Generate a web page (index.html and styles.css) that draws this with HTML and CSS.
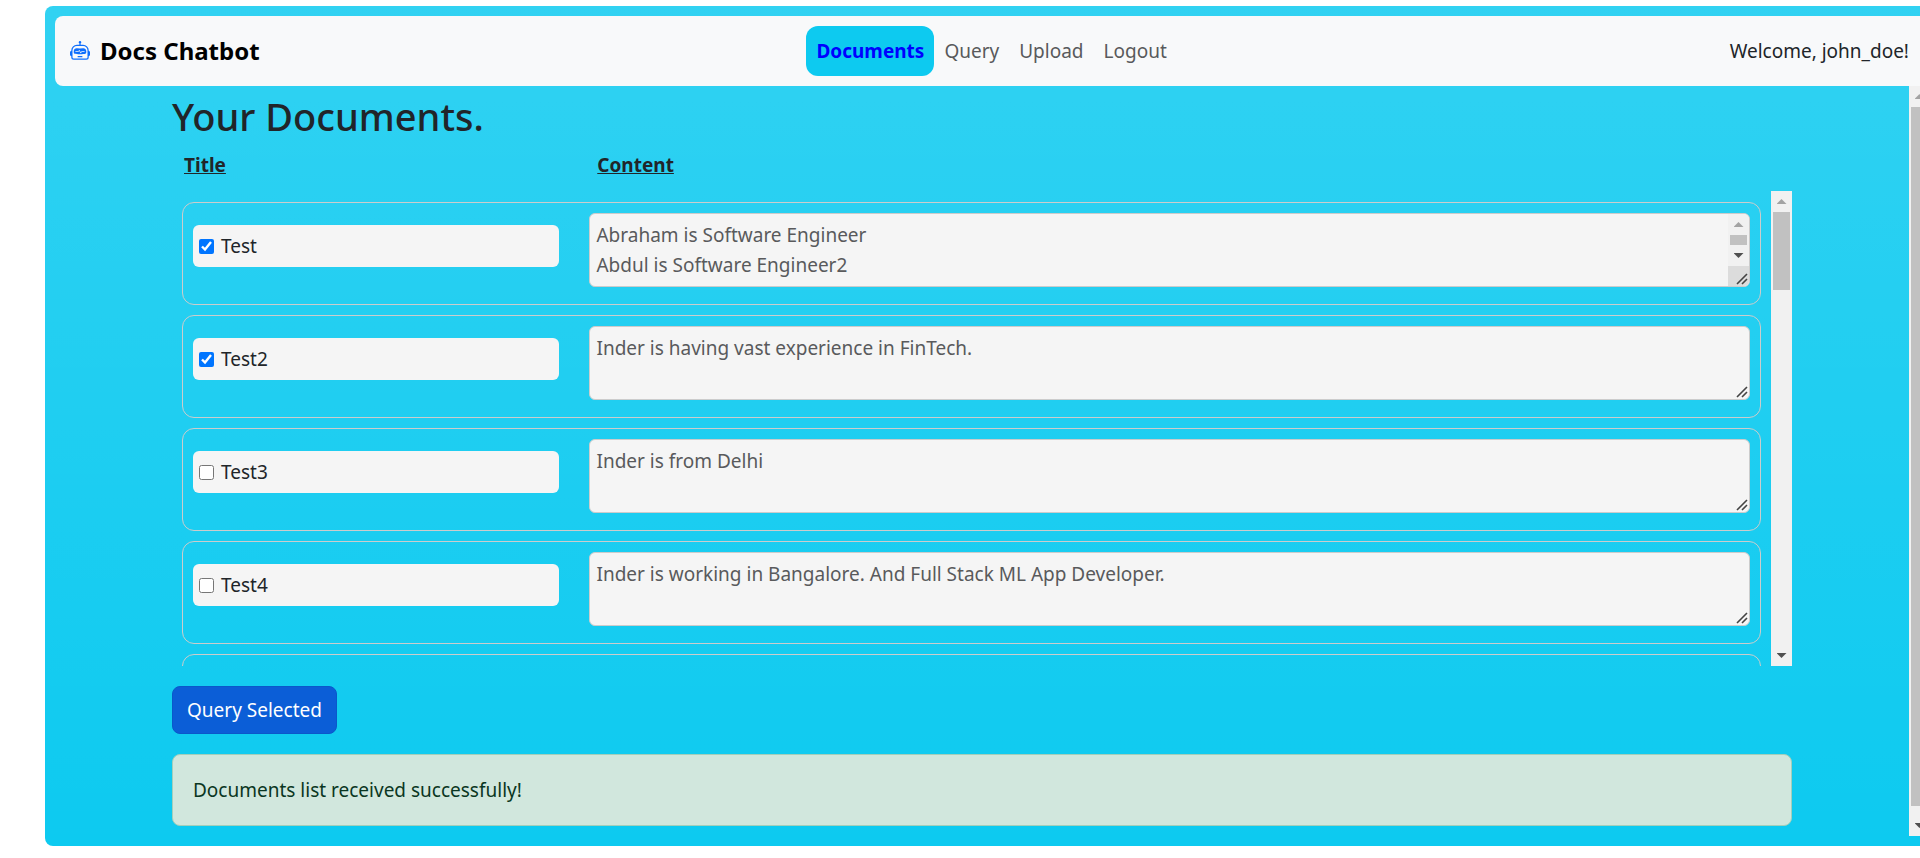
FILE: index.html
```html
<!DOCTYPE html>
<html lang="en">
<head>
<meta charset="utf-8">
<title>Docs Chatbot</title>
<link rel="stylesheet" href="styles.css">
</head>
<body>
<div class="app">
  <nav class="navbar">
    <a class="brand" href="#">
      <svg class="brand-icon" viewBox="0 0 16 16" fill="currentColor" aria-hidden="true">
        <path d="M6 12.5a.5.5 0 0 1 .5-.5h3a.5.5 0 0 1 0 1h-3a.5.5 0 0 1-.5-.5M3 8.062C3 6.76 4.235 5.765 5.53 5.886a26.6 26.6 0 0 0 4.94 0C11.765 5.765 13 6.76 13 8.062v1.157a.93.93 0 0 1-.765.935c-.845.147-2.34.346-4.235.346s-3.39-.2-4.235-.346A.93.93 0 0 1 3 9.219zm4.542-.827a.25.25 0 0 0-.217.068l-.92.9a25 25 0 0 1-1.871-.183.25.25 0 0 0-.068.495c.55.076 1.232.149 2.02.193a.25.25 0 0 0 .189-.071l.754-.736.847 1.71a.25.25 0 0 0 .404.062l.932-.97a25 25 0 0 0 1.922-.188.25.25 0 0 0-.068-.495c-.538.074-1.207.145-1.98.189a.25.25 0 0 0-.166.076l-.754.785-.842-1.7a.25.25 0 0 0-.182-.135"/>
        <path d="M8.500 1.866a1 1 0 1 0-1 0V3h-2A4.500 4.500 0 0 0 1 7.500V8a1 1 0 0 0-1 1v2a1 1 0 0 0 1 1v1a2 2 0 0 0 2 2h10a2 2 0 0 0 2-2v-1a1 1 0 0 0 1-1V9a1 1 0 0 0-1-1v-.5A4.500 4.500 0 0 0 10.500 3h-2zM14 7.500V13a1 1 0 0 1-1 1H3a1 1 0 0 1-1-1V7.500A3.500 3.500 0 0 1 5.500 4h5A3.500 3.500 0 0 1 14 7.500"/>
      </svg>
      Docs Chatbot
    </a>
    <div class="nav-links">
      <a class="nav-link active" href="#">Documents</a>
      <a class="nav-link" href="#">Query</a>
      <a class="nav-link" href="#">Upload</a>
      <a class="nav-link" href="#">Logout</a>
    </div>
    <span class="welcome">Welcome, john_doe!</span>
  </nav>
  <main class="page">
    <div class="page-body">
      <div class="container">
        <h1 class="heading">Your Documents.</h1>
        <div class="columns">
          <span>Title</span>
          <span>Content</span>
        </div>
        <div class="list">
          <div class="list-body">
            <div class="card">
              <label class="doc-title"><input type="checkbox" checked>Test</label>
              <div class="doc-content">
                <textarea aria-label="Content of Test" readonly>Abraham is Software Engineer
Abdul is Software Engineer2</textarea>
                <div class="scrollbar with-corner" aria-hidden="true">
                  <span class="arrow up"></span>
                  <span class="track"><span class="thumb"></span></span>
                  <span class="arrow down"></span>
                </div>
                <svg class="grip" viewBox="0 0 10 10" aria-hidden="true"><path d="M0 10L10 0M5 10L10 5"/></svg>
              </div>
            </div>
            <div class="card">
              <label class="doc-title"><input type="checkbox" checked>Test2</label>
              <div class="doc-content">
                <textarea aria-label="Content of Test2" readonly>Inder is having vast experience in FinTech.</textarea>
                <svg class="grip" viewBox="0 0 10 10" aria-hidden="true"><path d="M0 10L10 0M5 10L10 5"/></svg>
              </div>
            </div>
            <div class="card">
              <label class="doc-title"><input type="checkbox">Test3</label>
              <div class="doc-content">
                <textarea aria-label="Content of Test3" readonly>Inder is from Delhi</textarea>
                <svg class="grip" viewBox="0 0 10 10" aria-hidden="true"><path d="M0 10L10 0M5 10L10 5"/></svg>
              </div>
            </div>
            <div class="card">
              <label class="doc-title"><input type="checkbox">Test4</label>
              <div class="doc-content">
                <textarea aria-label="Content of Test4" readonly>Inder is working in Bangalore. And Full Stack ML App Developer.</textarea>
                <svg class="grip" viewBox="0 0 10 10" aria-hidden="true"><path d="M0 10L10 0M5 10L10 5"/></svg>
              </div>
            </div>
            <div class="card"></div>
          </div>
          <div class="scrollbar" aria-hidden="true">
            <span class="arrow up"></span>
            <span class="track"><span class="thumb" style="height: 18%"></span></span>
            <span class="arrow down"></span>
          </div>
        </div>
        <button class="query-button" type="button">Query Selected</button>
        <div class="alert" role="alert">Documents list received successfully!</div>
      </div>
    </div>
    <div class="scrollbar" aria-hidden="true">
      <span class="arrow up"></span>
      <span class="track"><span class="thumb" style="height: 98.7%"></span></span>
      <span class="arrow down"></span>
    </div>
  </main>
</div>
</body>
</html>
```
FILE: styles.css
```css
* {
  box-sizing: border-box;
}

body {
  margin: 0;
  overflow: hidden;
  background: #fff;
  color: #212529;
  font-family: "Segoe UI", "Noto Sans", "Open Sans", sans-serif;
  font-size: 19px;
  line-height: 30px;
}

.app {
  display: flex;
  flex-direction: column;
  height: calc(100vh - 18px);
  margin: 6px -20px 12px 45px;
  padding: 10px;
  border-radius: 8px;
  background: #0dcaf0 linear-gradient(rgba(255, 255, 255, 0.15), rgba(255, 255, 255, 0));
}

.navbar {
  display: flex;
  align-items: center;
  flex: none;
  padding: 10px 21px 10px 15px;
  border-radius: 8px;
  background: #f8f9fa;
}

.brand {
  display: flex;
  align-items: center;
  gap: 10px;
  color: #000;
  font-size: 24px;
  font-weight: 700;
  text-decoration: none;
}

.brand-icon {
  width: 20px;
  height: 20px;
  color: #0d6efd;
}

.nav-links {
  display: flex;
  flex: 1;
  justify-content: center;
  margin-right: 6px;
}

.nav-link {
  padding: 10px;
  border-radius: 12px;
  color: #595a5c;
  text-decoration: none;
}

.nav-link.active {
  background: #0dcaf0;
  color: #00f;
  font-weight: 700;
}

.page {
  display: flex;
  flex: 1;
  min-height: 0;
}

.page-body {
  flex: 1;
  min-width: 0;
  overflow-y: auto;
}

.container {
  max-width: 1650px;
  margin: 0 auto;
  padding: 6px 15px 20px;
}

.heading {
  margin: 0 0 10px;
  font-size: 38px;
  font-weight: 500;
  line-height: 48px;
}

.columns {
  display: grid;
  grid-template-columns: 6fr 19fr;
  column-gap: 36px;
  padding-left: 12px;
  font-weight: 700;
  text-decoration: underline;
}

.list {
  display: flex;
  height: 475px;
  margin-top: 11px;
}

.list-body {
  flex: 1;
  min-width: 0;
  padding: 11px 10px 0;
  overflow-y: auto;
}

.card {
  display: grid;
  grid-template-columns: 6fr 19fr;
  column-gap: 30px;
  align-items: start;
  height: 103px;
  margin-bottom: 10px;
  padding: 10px;
  border: 1px solid #ccc;
  border-radius: 12px;
}

.doc-title {
  display: flex;
  align-items: center;
  gap: 7px;
  margin-top: 12px;
  padding: 6px;
  border-radius: 6px;
  background: #f5f5f5;
}

.doc-title input {
  width: 15px;
  height: 15px;
  margin: 0;
}

.doc-content {
  position: relative;
  display: flex;
  height: 74px;
  overflow: hidden;
  border: 1px solid #ccc;
  border-radius: 6px;
  background: #f5f5f5;
}

.doc-content textarea {
  flex: 1;
  min-width: 0;
  padding: 6px;
  border: 0;
  background: transparent;
  color: #595a5c;
  font: inherit;
  resize: none;
}

.grip {
  position: absolute;
  right: 2px;
  bottom: 2px;
  width: 10px;
  height: 10px;
  overflow: visible;
  fill: none;
  stroke: #444;
  stroke-width: 1.6;
}

.scrollbar {
  display: flex;
  flex: none;
  flex-direction: column;
  width: 21px;
  background: #f1f1f1;
}

.scrollbar.with-corner {
  border-bottom: 20px solid #dcdcdc;
}

.track {
  flex: 1;
  min-height: 0;
}

.thumb {
  display: block;
  height: 100%;
  margin: 0 2px;
  background: #c1c1c1;
}

.arrow {
  display: flex;
  align-items: center;
  justify-content: center;
  height: 21px;
}

.arrow::before {
  width: 10px;
  height: 5px;
  content: "";
}

.arrow.up::before {
  background: #a3a3a3;
  clip-path: polygon(50% 0, 100% 100%, 0 100%);
}

.arrow.down::before {
  background: #505050;
  clip-path: polygon(0 0, 100% 0, 50% 100%);
}

.query-button {
  display: block;
  margin: 20px 0;
  padding: 8px 14px;
  border: 1px solid #0a58ca;
  border-radius: 8px;
  background: #0b5ed7;
  color: #fff;
  font: inherit;
}

.alert {
  padding: 20px;
  border: 1px solid #a3cfbb;
  border-radius: 8px;
  background: #d1e7dd;
  color: #0a3622;
}
```
